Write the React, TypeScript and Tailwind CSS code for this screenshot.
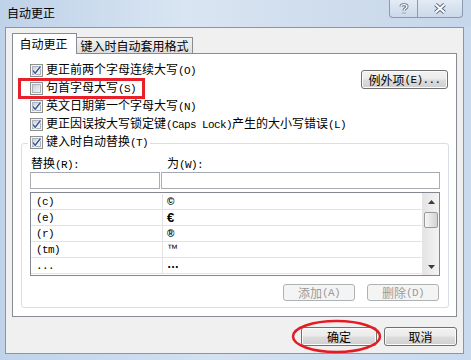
function Mix({ t }: { t: string }) {
  const parts = t.split(/([\x20-\x7e]+)/).filter(Boolean);
  return (
    <>
      {parts.map((p, i) =>
        /^[\x20-\x7e]+$/.test(p) ? (
          <span key={i} className="font-['Liberation_Mono',monospace] text-[11px] tracking-[-0.6px]">
            {p}
          </span>
        ) : (
          <span key={i}>{p}</span>
        )
      )}
    </>
  );
}

function CheckBox({ on }: { on: boolean }) {
  return (
    <svg width="13" height="13" viewBox="0 0 13 13" className="shrink-0">
      <defs>
        <linearGradient id="cbfill" x1="0" y1="0" x2="1" y2="1">
          <stop offset="0" stopColor="#c9ced6" />
          <stop offset="1" stopColor="#f7f7f8" />
        </linearGradient>
      </defs>
      <rect x="0.5" y="0.5" width="12" height="12" fill="#f4f4f4" stroke="#8e8f8f" />
      <rect x="2.5" y="2.5" width="8" height="8" fill="url(#cbfill)" stroke="#aeb3b9" />
      {on && (
        <>
          <path d="M2.8 6.4 L5.2 9.2 L10.4 2.6" stroke="#fff" strokeWidth="3" fill="none" />
          <path d="M2.8 6.4 L5.2 9.2 L10.4 2.6" stroke="#3b5a9c" strokeWidth="1.6" fill="none" />
        </>
      )}
    </svg>
  );
}

function Row({ on, text }: { on: boolean; text: string }) {
  return (
    <div className="flex h-[18px] items-center gap-[3px] whitespace-nowrap">
      <CheckBox on={on} />
      <span>
        <Mix t={text} />
      </span>
    </div>
  );
}

const btn =
  "flex items-center justify-center rounded-[3px] border border-[#707070] bg-[linear-gradient(#f2f2f2_0%,#ebebeb_48%,#dddddd_52%,#cfcfcf_100%)] shadow-[inset_0_0_0_1px_#fbfbfb]";

const listRows = [
  { k: "(c)", v: "©", c: "font-['Liberation_Sans'] font-bold text-[10px]" },
  { k: "(e)", v: "€", c: "font-['Liberation_Sans'] font-bold text-[13px]" },
  { k: "(r)", v: "®", c: "font-['Liberation_Sans'] font-bold text-[10px]" },
  { k: "(tm)", v: "™", c: "font-['Liberation_Sans'] text-[11px] -mt-[4px]" },
  { k: "...", v: "…", c: "font-['Liberation_Sans'] font-bold text-[12px] -mt-[4px]" },
];

export default function App() {
  return (
    <div className="relative flex h-[360px] w-[471px] flex-col overflow-hidden bg-[linear-gradient(90deg,#c0d3e9,#d3e1f0_45%,#c9daee)] font-['Noto_Sans_CJK_SC',sans-serif] text-[12px] leading-[14px] text-black">
      {/* title bar */}
      <div className="flex h-[27px] shrink-0 items-start justify-between bg-[linear-gradient(90deg,#bfd2e9,#d9e5f2_40%,#cfdcec_70%,#c6d7eb)]">
        <span className="ml-[7px] mt-[6px]">自动更正</span>
        <div className="mr-[8px] flex h-[18px]">
          <div className="flex w-[28px] items-center justify-center rounded-bl-[4px] border-b border-l border-[#8a9bb1] bg-[linear-gradient(#e3ebf5,#cbd9ea)]">
            <svg width="10" height="12" viewBox="0 0 10 12">
              <path d="M2 3.5 C2 1 8 1 8 3.5 C8 5.5 5 5.5 5 7.5 M5 9.5 L5 10.5" stroke="#5c6b80" strokeWidth="3" fill="none" />
              <path d="M2 3.5 C2 1 8 1 8 3.5 C8 5.5 5 5.5 5 7.5 M5 9.5 L5 10.5" stroke="#fff" strokeWidth="1.4" fill="none" />
            </svg>
          </div>
          <div className="flex w-[46px] items-center justify-center rounded-br-[4px] border-x border-b border-[#8a9bb1] bg-[linear-gradient(#e3ebf5,#cbd9ea)]">
            <svg width="14" height="11" viewBox="0 0 14 11">
              <path d="M2.5 1.5 L11.5 9.5 M11.5 1.5 L2.5 9.5" stroke="#5c6b80" strokeWidth="4" fill="none" />
              <path d="M2.5 1.5 L11.5 9.5 M11.5 1.5 L2.5 9.5" stroke="#fff" strokeWidth="2" fill="none" />
            </svg>
          </div>
        </div>
      </div>

      {/* client area */}
      <div className="mb-[6px] ml-[5px] mr-[7px] flex h-[327px] flex-col border border-[#8796aa] bg-[#f0f0f0] px-[6px] pb-[7px] pt-[5px]">
        {/* tabs */}
        <div className="flex h-[20px] items-start">
          <div className="relative z-10 flex h-[21px] w-[65px] items-center justify-center border border-b-0 border-[#898c95] bg-white pr-[2px]">
            自动更正
          </div>
          <div className="mt-[4px] flex h-[16px] w-[116px] items-center justify-center border-r border-t border-[#898c95] bg-[linear-gradient(#f3f3f3,#dedede)]">
            键入时自动套用格式
          </div>
        </div>

        {/* panel */}
        <div className="flex h-[264px] w-[445px] flex-col border border-[#898c95] bg-white pb-[8px] pt-[7px]">
          <div className="flex">
            <div className="flex flex-col pl-[17px]">
              <Row on text="更正前两个字母连续大写(O)" />
              <Row on={false} text="句首字母大写(S)" />
              <Row on text="英文日期第一个字母大写(N)" />
              <Row on text="更正因误按大写锁定键(Caps Lock)产生的大小写错误(L)" />
            </div>
            <div className="ml-auto mr-[8px] mt-[9px]">
              <div className={`${btn} h-[19px] w-[87px]`}>
                <Mix t="例外项(E)..." />
              </div>
            </div>
          </div>

          {/* group box */}
          <div className="relative ml-[8px] mt-[10px] flex h-[165px] w-[428px] flex-col rounded-[3px] border border-[#d5dfe5] pl-[8px] pt-[12px]">
            <div className="absolute left-[6px] top-[-11px] flex h-[18px] items-center gap-[3px] bg-white px-[2px]">
              <CheckBox on />
              <span>
                <Mix t="键入时自动替换(T)" />
              </span>
            </div>

            <div className="flex h-[14px]">
              <span className="w-[131px] pl-[1px]">
                <Mix t="替换(R):" />
              </span>
              <span className="pl-[6px]">
                <Mix t="为(W):" />
              </span>
            </div>
            <div className="mt-[2px] flex gap-[1px]">
              <div className="h-[17px] w-[130px] border border-[#abadb3] border-t-[#a5a9b1] bg-white" />
              <div className="h-[17px] w-[279px] border border-[#abadb3] border-t-[#a5a9b1] bg-white" />
            </div>

            {/* list */}
            <div className="mt-[3px] flex h-[84px] w-[410px] border border-[#828790] bg-white">
              <div className="flex flex-1 flex-col pt-[1px]">
                {listRows.map((r) => (
                  <div key={r.k} className="flex h-[16px] border-b border-[#e3e3e3]">
                    <div className="flex w-[132px] items-center border-r border-[#e3e3e3] pl-[5px]">
                      <Mix t={r.k} />
                    </div>
                    <div className="flex items-center pl-[4px]">
                      <span className={r.c}>{r.v}</span>
                    </div>
                  </div>
                ))}
              </div>
              <div className="flex w-[17px] flex-col border-l border-[#e6e6e6] bg-[linear-gradient(90deg,#e4e4e4,#f4f4f4)]">
                <div className="flex h-[17px] items-center justify-center">
                  <svg width="7" height="4" viewBox="0 0 7 4">
                    <path d="M0 4 L3.5 0 L7 4 Z" fill="#3d3d3d" />
                  </svg>
                </div>
                <div className="mx-[1px] mt-[2px] h-[16px] rounded-[2px] border border-[#9a9a9a] bg-[linear-gradient(90deg,#f6f6f6,#e4e4e4_50%,#d4d4d4)]" />
                <div className="flex-1" />
                <div className="flex h-[17px] items-center justify-center">
                  <svg width="7" height="4" viewBox="0 0 7 4">
                    <path d="M0 0 L7 0 L3.5 4 Z" fill="#3d3d3d" />
                  </svg>
                </div>
              </div>
            </div>

            <div className="mr-[9px] mt-[8px] flex justify-end gap-[12px]">
              <div className="flex h-[17px] w-[72px] items-center justify-center rounded-[3px] border border-[#adb2b5] bg-[#f4f4f4] text-[#9a9a9a]">
                <Mix t="添加(A)" />
              </div>
              <div className="flex h-[17px] w-[72px] items-center justify-center rounded-[3px] border border-[#adb2b5] bg-[#f4f4f4] text-[#9a9a9a]">
                <Mix t="删除(D)" />
              </div>
            </div>
          </div>
        </div>

        {/* dialog buttons */}
        <div className="mt-[10px] flex justify-end gap-[7px]">
          <div className={`${btn} h-[19px] w-[76px]`}>确定</div>
          <div className={`${btn} h-[19px] w-[73px]`}>取消</div>
        </div>
      </div>

      {/* red annotations */}
      <div className="pointer-events-none absolute left-[18px] top-[78px] h-[21px] w-[127px] border-[3px] border-[#e8202a]" />
      <svg className="pointer-events-none absolute left-[290px] top-[318px]" width="94" height="38" viewBox="0 0 94 38">
        <ellipse cx="46.5" cy="18.5" rx="43.5" ry="15.5" stroke="#e41b23" strokeWidth="2.5" fill="none" />
      </svg>
    </div>
  );
}
